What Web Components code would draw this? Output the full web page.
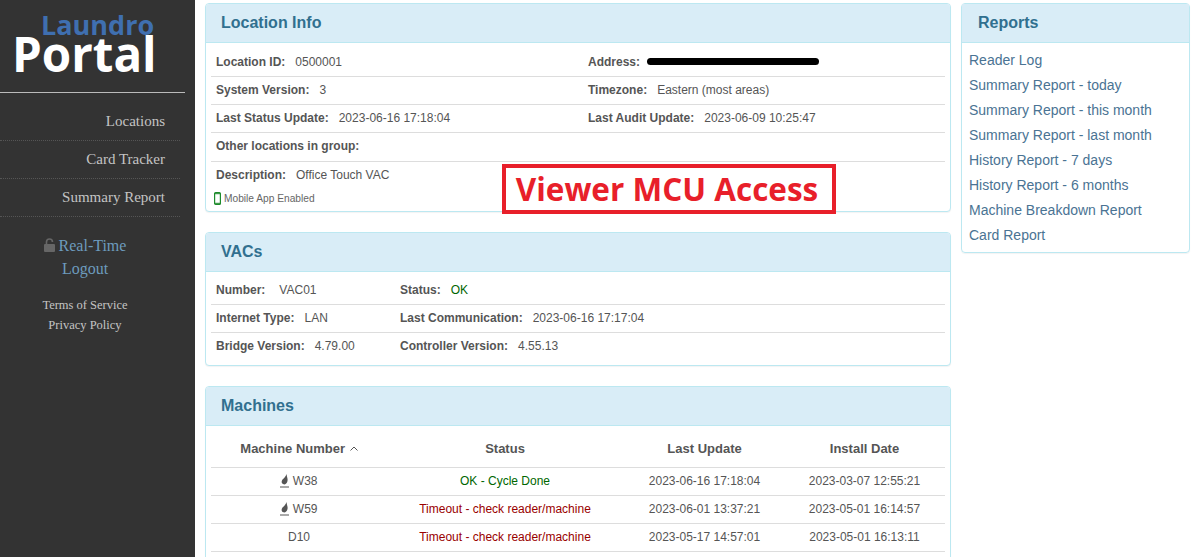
<!DOCTYPE html>
<html>
<head>
<meta charset="utf-8">
<style>
  html, body { margin: 0; height: 557px; overflow: hidden; background: #fff; }
  body { font-family: "Liberation Sans", Arial, sans-serif; font-size: 12px; color: #555; }
</style>
</head>
<body>
<portal-app>
  <side-nav slot="side"></side-nav>

  <info-panel slot="main" heading="Location Info" style="height:209px;--pad:6px">
    <info-row><info-cell label="Location ID:" value="0500001" style="width:372px"></info-cell><info-cell label="Address:"><redact-bar></redact-bar></info-cell></info-row>
    <info-row><info-cell label="System Version:" value="3" style="width:372px"></info-cell><info-cell label="Timezone:" value="Eastern (most areas)"></info-cell></info-row>
    <info-row><info-cell label="Last Status Update:" value="2023-06-16 17:18:04" style="width:372px"></info-cell><info-cell label="Last Audit Update:" value="2023-06-09 10:25:47"></info-cell></info-row>
    <info-row style="height:29px"><info-cell label="Other locations in group:"></info-cell></info-row>
    <info-row last style="height:27px"><info-cell label="Description:" value="Office Touch VAC"></info-cell></info-row>
    <app-flag>Mobile App Enabled</app-flag>
    <stamp-box>Viewer MCU Access</stamp-box>
  </info-panel>

  <info-panel slot="main" heading="VACs" style="height:134px;margin-top:20px">
    <info-row><info-cell label="Number:" value="VAC01" style="width:184px;--gap:14px"></info-cell><info-cell label="Status:" value="OK" tone="ok"></info-cell></info-row>
    <info-row><info-cell label="Internet Type:" value="LAN" style="width:184px"></info-cell><info-cell label="Last Communication:" value="2023-06-16 17:17:04"></info-cell></info-row>
    <info-row last><info-cell label="Bridge Version:" value="4.79.00" style="width:184px"></info-cell><info-cell label="Controller Version:" value="4.55.13"></info-cell></info-row>
  </info-panel>

  <info-panel slot="main" heading="Machines" style="height:240px;margin-top:20px;--pad:0px">
    <machine-table></machine-table>
  </info-panel>

  <report-panel slot="aside"></report-panel>
</portal-app>

<script>
class PortalApp extends HTMLElement {
  constructor() {
    super();
    this.attachShadow({ mode: 'open' }).innerHTML = `
      <style>
        :host { display: grid; grid-template-columns: 195px 1fr; height: 557px; overflow: hidden; }
        .content { display: flex; align-items: flex-start; gap: 10px; padding: 3px 3px 0 10px; min-width: 0; }
        .main { width: 746px; flex: none; }
        .aside { width: 229px; flex: none; }
      </style>
      <slot name="side"></slot>
      <div class="content">
        <div class="main"><slot name="main"></slot></div>
        <div class="aside"><slot name="aside"></slot></div>
      </div>`;
  }
}
customElements.define('portal-app', PortalApp);

class SideNav extends HTMLElement {
  constructor() {
    super();
    this.attachShadow({ mode: 'open' }).innerHTML = `
      <style>
        :host { display: block; background: #333; height: 557px; font-family: "Liberation Serif", "Times New Roman", serif; color: #ccc; }
        .logo { height: 92px; width: 185px; border-bottom: 1px solid #bbb; font-family: "Open Sans", sans-serif; font-weight: 700; }
        .logo .a { color: #3f6fb0; font-size: 27px; line-height: 22px; padding: 14px 0 0 41px; }
        .logo .b { color: #fff; font-size: 47.500px; line-height: 36px; padding-left: 12px; }
        nav { width: 180px; padding-top: 10px; }
        nav a { display: block; height: 37px; line-height: 37px; text-align: right; padding-right: 15px; font-size: 15px; color: #c4c4c4; border-bottom: 1px dotted #555; }
        .links { margin-top: 17px; width: 170px; text-align: center; font-size: 16px; line-height: 23px; color: #6d9bbd; }
        .links svg { vertical-align: -1px; }
        .legal { margin-top: 15px; width: 170px; text-align: center; font-size: 12.500px; line-height: 20px; color: #c4c4c4; }
      </style>
      <div class="logo"><div class="a">Laundro</div><div class="b">Portal</div></div>
      <nav><a>Locations</a><a>Card Tracker</a><a>Summary Report</a></nav>
      <div class="links">
        <div><svg width="11" height="14" viewBox="0 0 11 14"><path d="M2.500 6.500V4a3 3 0 0 1 6 0" fill="none" stroke="#666" stroke-width="1.6"/><rect x="0" y="6" width="11" height="8" rx="1" fill="#666"/></svg> Real-Time</div>
        <div>Logout</div>
      </div>
      <div class="legal"><div>Terms of Service</div><div>Privacy Policy</div></div>`;
  }
}
customElements.define('side-nav', SideNav);

class InfoPanel extends HTMLElement {
  constructor() {
    super();
    this.attachShadow({ mode: 'open' }).innerHTML = `
      <style>
        :host { display: block; box-sizing: border-box; border: 1px solid #bce8f1; border-radius: 4px; background: #fff; position: relative; box-shadow: 0 1px 1px rgba(0,0,0,.05); }
        h3 { margin: 0; height: 39px; line-height: 38px; box-sizing: border-box; padding-left: 15px; background: #d9edf7; border-bottom: 1px solid #bce8f1; color: #31708f; font-size: 16px; font-weight: 700; border-radius: 3px 3px 0 0; }
        .body { padding: var(--pad, 5px) 5px 0; }
      </style>
      <h3></h3>
      <div class="body"><slot></slot></div>`;
    this.shadowRoot.querySelector('h3').textContent = this.getAttribute('heading');
  }
}
customElements.define('info-panel', InfoPanel);

class InfoRow extends HTMLElement {
  constructor() {
    super();
    this.attachShadow({ mode: 'open' }).innerHTML = `
      <style>
        :host { display: flex; height: 28px; box-sizing: border-box; align-items: center; border-bottom: 1px solid #ddd; padding: 0 0 2px 5px; }
        :host([last]) { border-bottom: 0; }
      </style>
      <slot></slot>`;
  }
}
customElements.define('info-row', InfoRow);

class InfoCell extends HTMLElement {
  constructor() {
    super();
    this.attachShadow({ mode: 'open' }).innerHTML = `
      <style>
        :host { display: block; flex: none; white-space: nowrap; font-size: 12px; color: #555; }
        b { margin-right: var(--gap, 10px); }
        :host([tone=ok]) span { color: #060; }
      </style>
      <b></b><span></span><slot></slot>`;
    this.shadowRoot.querySelector('b').textContent = this.getAttribute('label');
    this.shadowRoot.querySelector('span').textContent = this.getAttribute('value') || '';
  }
}
customElements.define('info-cell', InfoCell);

class RedactBar extends HTMLElement {
  constructor() {
    super();
    this.attachShadow({ mode: 'open' }).innerHTML = `
      <style>:host { display: inline-block; width: 172px; height: 7px; margin-left: -3px; border-radius: 4px; background: #000; vertical-align: 1px; }</style>`;
  }
}
customElements.define('redact-bar', RedactBar);

class AppFlag extends HTMLElement {
  constructor() {
    super();
    this.attachShadow({ mode: 'open' }).innerHTML = `
      <style>
        :host { display: flex; align-items: center; gap: 3px; font-size: 10.200px; color: #666; padding-left: 3px; margin-top: 3px; }
        svg { flex: none; }
      </style>
      <svg width="7" height="13" viewBox="0 0 7 13"><rect x=".6" y=".6" width="5.800" height="11.800" rx="1" fill="#fff" stroke="#1d8a2b" stroke-width="1.200"/><path d="M1 1.700h5M1 11.300h5" stroke="#1d8a2b"/></svg>
      <slot></slot>`;
  }
}
customElements.define('app-flag', AppFlag);

class StampBox extends HTMLElement {
  constructor() {
    super();
    this.attachShadow({ mode: 'open' }).innerHTML = `
      <style>
        :host { position: absolute; left: 296px; top: 160px; width: 334px; height: 50px; box-sizing: border-box; border: 4px solid #e81f2a; background: #fff; color: #e81f2a; font: 700 31.500px/41px "Open Sans", sans-serif; text-align: center; white-space: nowrap; padding-right: 4px; }
      </style>
      <slot></slot>`;
  }
}
customElements.define('stamp-box', StampBox);

class MachineTable extends HTMLElement {
  constructor() {
    super();
    const rows = [
      ['W38', 'OK - Cycle Done', 'ok', '2023-06-16 17:18:04', '2023-03-07 12:55:21', true],
      ['W59', 'Timeout - check reader/machine', 'bad', '2023-06-01 13:37:21', '2023-05-01 16:14:57', true],
      ['D10', 'Timeout - check reader/machine', 'bad', '2023-05-17 14:57:01', '2023-05-01 16:13:11', false],
    ];
    const drop = `<svg width="9" height="14" viewBox="0 0 9 14"><path d="M6.500 0C6.800 3 8 4.500 7.500 7 7 9.500 5 10.800 3.500 10.300 1.500 9.800 1 7.500 2.500 5.600 4 4 5.800 2.800 6.500 0Z" fill="#555"/><path d="M0 13h9" stroke="#555"/></svg>`;
    this.attachShadow({ mode: 'open' }).innerHTML = `
      <style>
        :host { display: block; font-size: 12px; color: #555; }
        .r { display: grid; grid-template-columns: 176px 236px 163px 157px; height: 28px; align-items: center; text-align: center; border-bottom: 1px solid #ddd; box-sizing: border-box; padding-bottom: 2px; }
        .h { height: 42px; font-weight: 700; font-size: 13px; padding: 3px 0 0; }
        .h svg { margin-left: 1px; vertical-align: 2px; }
        .ok { color: #060; }
        .bad { color: #900; }
        .num svg { vertical-align: -3px; }
      </style>
      <div class="r h"><div>Machine Number <svg width="8" height="5" viewBox="0 0 8 5"><path d="M.5 4.500 4 1 7.500 4.500" fill="none" stroke="#555"/></svg></div><div>Status</div><div>Last Update</div><div>Install Date</div></div>
      ${rows.map((r) => `<div class="r"><div class="num">${r[5] ? drop : ''} ${r[0]}</div><div class="${r[2]}">${r[1]}</div><div>${r[3]}</div><div>${r[4]}</div></div>`).join('')}`;
  }
}
customElements.define('machine-table', MachineTable);

class ReportPanel extends HTMLElement {
  constructor() {
    super();
    const links = ['Reader Log', 'Summary Report - today', 'Summary Report - this month', 'Summary Report - last month', 'History Report - 7 days', 'History Report - 6 months', 'Machine Breakdown Report', 'Card Report'];
    this.attachShadow({ mode: 'open' }).innerHTML = `
      <style>
        :host { display: block; box-sizing: border-box; height: 250px; border: 1px solid #bce8f1; border-radius: 4px; box-shadow: 0 1px 1px rgba(0,0,0,.05); }
        h3 { margin: 0; height: 39px; line-height: 38px; box-sizing: border-box; padding-left: 16px; background: #d9edf7; border-bottom: 1px solid #bce8f1; color: #31708f; font-size: 16px; font-weight: 700; }
        ul { list-style: none; margin: 0; padding: 5px 0 0 7px; }
        li { height: 25px; line-height: 25px; font-size: 14px; color: #4a7393; white-space: nowrap; }
      </style>
      <h3>Reports</h3>
      <ul>${links.map((l) => `<li>${l}</li>`).join('')}</ul>`;
  }
}
customElements.define('report-panel', ReportPanel);
</script>
</body>
</html>
